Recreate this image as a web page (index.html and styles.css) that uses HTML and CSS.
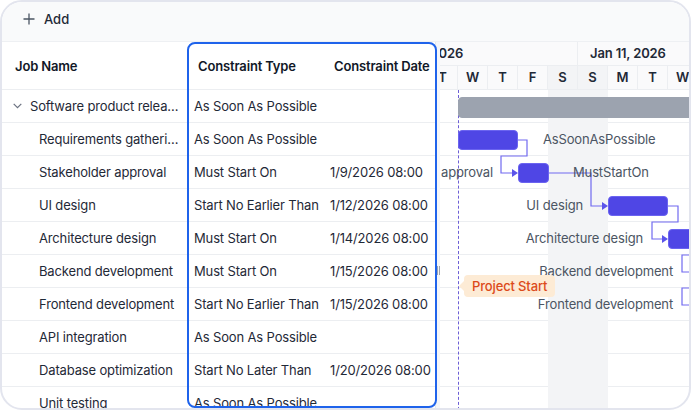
FILE: index.html
```html
<!DOCTYPE html>
<html lang="en">
<head>
    <meta charset="UTF-8">
    <meta name="viewport" content="width=device-width, initial-scale=1.0">
    <title>Gantt - Constraints</title>
    <link rel="stylesheet" href="styles.css">
</head>
<body>

<div class="gantt">
    <!-- Toolbar -->
    <div class="toolbar">
        <button class="tool-btn">
            <svg width="12" height="12" viewBox="0 0 12 12"><path d="M6 0.5V11.5M0.5 6H11.5" stroke="#4b5563" stroke-width="1.3" fill="none"/></svg>
            Add
        </button>
    </div>

    <div class="gantt-main">
        <!-- Task grid -->
        <div class="grid">
            <div class="row head">
                <div class="cell name">Job Name</div>
                <div class="cell type">Constraint Type</div>
                <div class="cell date">Constraint Date</div>
            </div>
            <div class="row">
                <div class="cell name parent">
                    <svg class="chevron" width="9" height="6" viewBox="0 0 9 6"><path d="M0.7 0.8L4.5 4.6L8.3 0.8" stroke="#6b7280" stroke-width="1.2" fill="none"/></svg>
                    <span class="clip">Software product release</span>
                </div>
                <div class="cell type">As Soon As Possible</div>
                <div class="cell date"></div>
            </div>
            <div class="row">
                <div class="cell name"><span class="clip">Requirements gathering</span></div>
                <div class="cell type">As Soon As Possible</div>
                <div class="cell date"></div>
            </div>
            <div class="row">
                <div class="cell name">Stakeholder approval</div>
                <div class="cell type">Must Start On</div>
                <div class="cell date">1/9/2026 08:00</div>
            </div>
            <div class="row">
                <div class="cell name">UI design</div>
                <div class="cell type">Start No Earlier Than</div>
                <div class="cell date">1/12/2026 08:00</div>
            </div>
            <div class="row">
                <div class="cell name">Architecture design</div>
                <div class="cell type">Must Start On</div>
                <div class="cell date">1/14/2026 08:00</div>
            </div>
            <div class="row">
                <div class="cell name">Backend development</div>
                <div class="cell type">Must Start On</div>
                <div class="cell date">1/15/2026 08:00</div>
            </div>
            <div class="row">
                <div class="cell name">Frontend development</div>
                <div class="cell type">Start No Earlier Than</div>
                <div class="cell date">1/15/2026 08:00</div>
            </div>
            <div class="row">
                <div class="cell name">API integration</div>
                <div class="cell type">As Soon As Possible</div>
                <div class="cell date"></div>
            </div>
            <div class="row">
                <div class="cell name">Database optimization</div>
                <div class="cell type">Start No Later Than</div>
                <div class="cell date">1/20/2026 08:00</div>
            </div>
            <div class="row">
                <div class="cell name">Unit testing</div>
                <div class="cell type">As Soon As Possible</div>
                <div class="cell date"></div>
            </div>

            <!-- highlighted constraint columns -->
            <div class="col-highlight"></div>
        </div>

        <div class="splitter"><span class="grip"></span></div>

        <!-- Timeline -->
        <div class="chart">
            <div class="timeline">
                <div class="months">
                    <div class="month first">Jan 4, 2026</div>
                    <div class="month">Jan 11, 2026</div>
                </div>
                <div class="days">
                    <div class="day weekend">S</div><div class="day">M</div><div class="day">T</div><div class="day">W</div><div class="day">T</div><div class="day">F</div><div class="day weekend">S</div>
                    <div class="day weekend">S</div><div class="day">M</div><div class="day">T</div><div class="day">W</div><div class="day">T</div><div class="day">F</div><div class="day weekend">S</div>
                </div>

                <div class="chart-body">
                    <div class="weekend-band"></div>
                    <div class="chart-row"></div><div class="chart-row"></div><div class="chart-row"></div>
                    <div class="chart-row"></div><div class="chart-row"></div><div class="chart-row"></div>
                    <div class="chart-row"></div><div class="chart-row"></div><div class="chart-row"></div>
                    <div class="chart-row"></div>

                    <div class="start-line"></div>

                    <svg class="links" width="420" height="330" viewBox="0 0 420 330">
                        <g stroke="#7069f0" stroke-width="1.2" fill="none">
                            <path d="M150 50H159V66H133V83H144"/>
                            <path d="M181 83H223V116H234"/>
                            <path d="M300 116H310V132H284V149H294"/>
                            <path d="M340 165H314V182H324"/>
                            <path d="M340 198H314V215H324"/>
                        </g>
                        <g fill="#5b54ea">
                            <path d="M144 79L150 83L144 87Z"/>
                            <path d="M234 112L240 116L234 120Z"/>
                            <path d="M294 145L300 149L294 153Z"/>
                        </g>
                    </svg>

                    <div class="bar summary" style="top: 7px; left: 90px; width: 400px;"></div>

                    <div class="bar" style="top: 40px; left: 90px; width: 60px;"></div>
                    <div class="bar-label right" style="top: 33px; left: 175px;">AsSoonAsPossible</div>

                    <div class="bar-label left" style="top: 66px; right: 295px;">Stakeholder approval</div>
                    <div class="bar" style="top: 73px; left: 150px; width: 31px;"></div>
                    <div class="bar-label right" style="top: 66px; left: 205px;">MustStartOn</div>

                    <div class="bar-label left" style="top: 99px; right: 205px;">UI design</div>
                    <div class="bar" style="top: 106px; left: 240px; width: 60px;"></div>

                    <div class="bar-label left" style="top: 132px; right: 145px;">Architecture design</div>
                    <div class="bar" style="top: 139px; left: 300px; width: 60px;"></div>

                    <div class="bar-label left" style="top: 165px; right: 115px;">Backend development</div>
                    <div class="bar-label left" style="top: 198px; right: 115px;">Frontend development</div>

                    <div class="marker">Project Start</div>
                </div>
            </div>
        </div>
    </div>
</div>

</body>
</html>
```

FILE: styles.css
```css
* {
    box-sizing: border-box;
}
body {
    margin: 0;
    font-family: Inter, "Noto Sans", sans-serif;
    font-size: 13px;
    letter-spacing: -0.15px;
    color: #1f2937;
    background-color: #fff;
}
.gantt {
    width: 691px;
    height: 410px;
    border: 2px solid #e3e5ee;
    border-radius: 22px;
    overflow: hidden;
    display: flex;
    flex-direction: column;
    background-color: #fff;
}
.toolbar {
    height: 40px;
    flex: none;
    display: flex;
    align-items: center;
    padding: 0 0 5px 21px;
    background-color: #f9fafb;
    border-bottom: 1px solid #eef0f3;
}
.tool-btn {
    display: flex;
    align-items: center;
    gap: 9px;
    padding: 0;
    border: none;
    background: none;
    font: inherit;
    font-weight: 500;
    color: #1f2937;
    cursor: pointer;
}
.gantt-main {
    flex: 1;
    display: flex;
    min-height: 0;
}

/* grid */
.grid {
    width: 433px;
    flex: none;
    position: relative;
}
.row {
    display: flex;
    align-items: center;
    height: 33px;
    border-bottom: 1px solid #eceef1;
}
.row.head {
    height: 48px;
    font-weight: 600;
    color: #111827;
}
.cell {
    white-space: nowrap;
}
.cell.name {
    width: 184px;
    padding-left: 37px;
    padding-right: 6px;
}
.cell.type {
    width: 136px;
    padding-left: 8px;
}
.cell.date {
    width: 113px;
    padding-left: 8px;
}
.head .cell.name {
    padding-left: 13px;
}
.head .cell.type,
.head .cell.date {
    padding-left: 12px;
}
.cell.parent {
    display: flex;
    align-items: center;
    gap: 8px;
    padding-left: 11px;
}
.chevron {
    flex: none;
}
.clip {
    display: block;
    overflow: hidden;
    text-overflow: ellipsis;
}
.col-highlight {
    position: absolute;
    top: 0;
    bottom: 0;
    left: 184.5px;
    width: 250px;
    border: 2px solid #1f63eb;
    border-radius: 8px;
    z-index: 2;
    pointer-events: none;
}

.splitter {
    width: 5px;
    flex: none;
    background-color: #f5f6f8;
    border-left: 1px solid #e5e7eb;
}
.grip {
    display: block;
    width: 3px;
    height: 9px;
    margin: 224px 0 0 1px;
    border-left: 1px solid #9ca3af;
    border-right: 1px solid #9ca3af;
}

/* timeline */
.chart {
    flex: 1;
    overflow: hidden;
}
.timeline {
    width: 420px;
    margin-left: -72px;
}
.months,
.days {
    display: flex;
    height: 24px;
    background-color: #fafafb;
    border-bottom: 1px solid #eceef1;
    font-weight: 600;
    color: #1f2937;
}
.month {
    width: 210px;
    flex: none;
    padding-left: 12px;
    line-height: 23px;
    border-right: 1px solid #eceef1;
    white-space: nowrap;
}
.month.first {
    padding-left: 22px;
}
.day {
    width: 30px;
    flex: none;
    text-align: center;
    line-height: 23px;
    border-right: 1px solid #eceef1;
}
.day.weekend {
    background-color: #f3f4f6;
}
.chart-body {
    position: relative;
    height: 330px;
}
.chart-row {
    height: 33px;
    border-bottom: 1px solid #eceef1;
}
.weekend-band {
    position: absolute;
    top: 0;
    bottom: 0;
    left: 180px;
    width: 60px;
    background-color: #f3f4f6;
}
.start-line {
    position: absolute;
    top: 0;
    bottom: 0;
    left: 90px;
    border-left: 1px dashed #6d5fd6;
}
.links {
    position: absolute;
    top: 0;
    left: 0;
}
.bar {
    position: absolute;
    height: 20px;
    background-color: #4f46e5;
    border: 1px solid #6b64f0;
    border-radius: 4px;
}
.bar.summary {
    background-color: #9ca3af;
    border-color: #9ca3af;
    height: 21px;
}
.bar-label {
    position: absolute;
    line-height: 33px;
    color: #4b5563;
    white-space: nowrap;
}
.marker {
    position: absolute;
    top: 185px;
    left: 96px;
    height: 22px;
    padding: 0 8px;
    line-height: 22px;
    font-weight: 500;
    color: #dc4a1a;
    background-color: #fdebd5;
    border-radius: 4px;
    white-space: nowrap;
}
.marker::before {
    content: "";
    position: absolute;
    left: -5px;
    top: 6px;
    border-top: 5px solid transparent;
    border-bottom: 5px solid transparent;
    border-right: 5px solid #fdebd5;
}
```
